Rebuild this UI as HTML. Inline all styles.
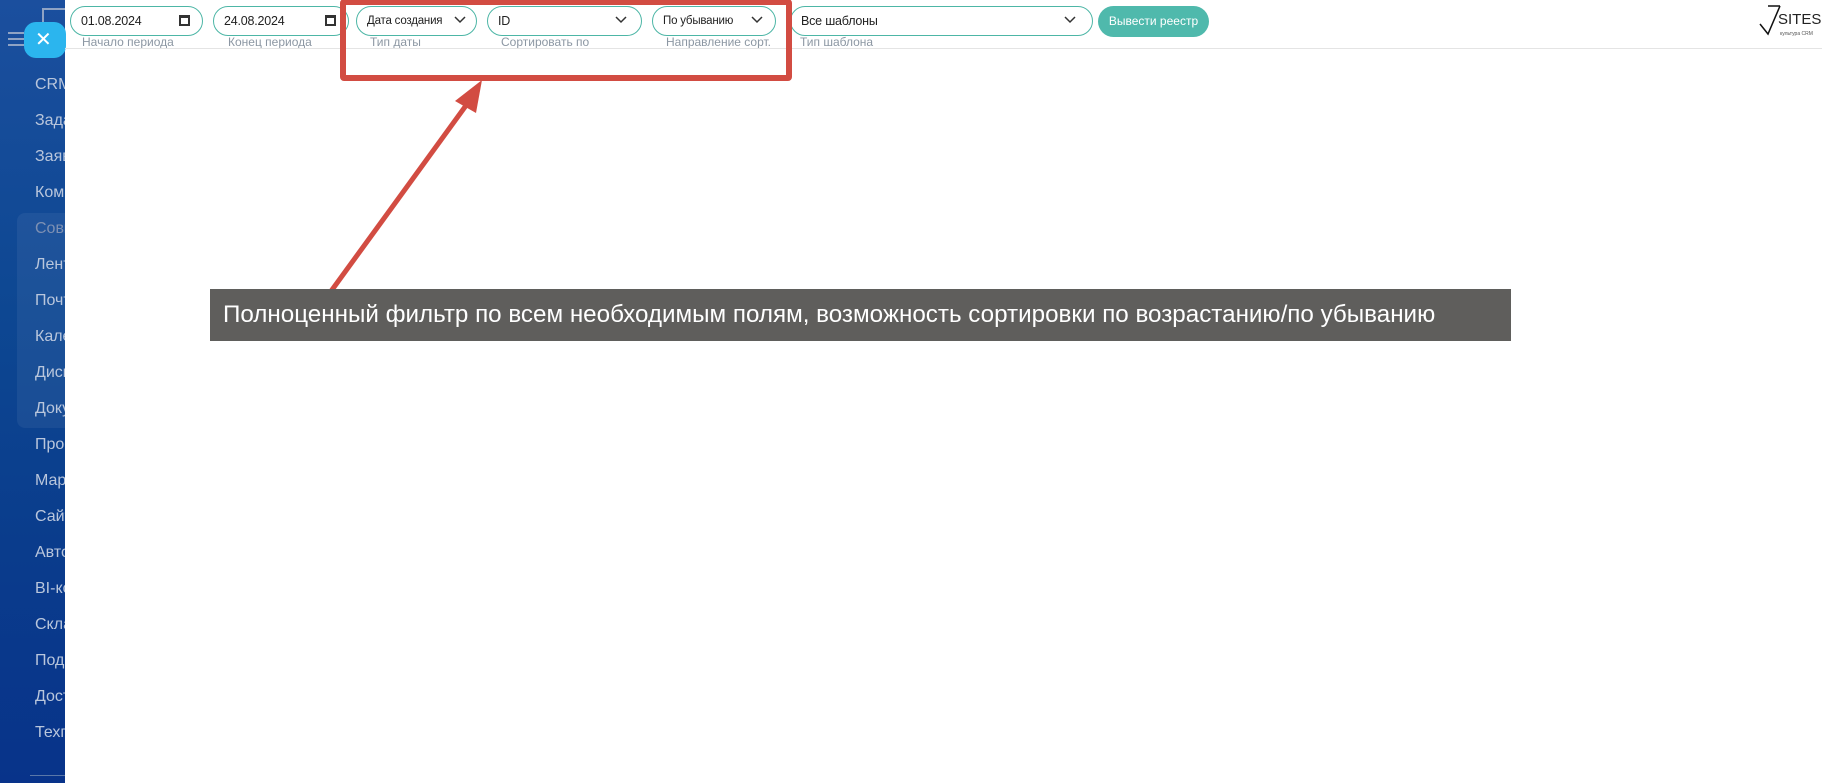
<!DOCTYPE html>
<html><head><meta charset="utf-8"><style>
*{box-sizing:border-box;margin:0;padding:0}
body{width:1822px;height:783px;overflow:hidden;background:#fff;font-family:"Liberation Sans","DejaVu Sans",sans-serif;position:relative}
.sb{position:absolute;left:0;top:0;width:65px;height:783px;background:linear-gradient(180deg,#1b4f9e 0%,#0d4792 40%,#0a3c8c 70%,#08338a 100%)}
.sb .it{position:absolute;left:35px;color:#b9c6dc;font-size:16px;white-space:nowrap;width:30px;overflow:hidden}
.grp{position:absolute;left:17px;top:213px;width:60px;height:215px;background:rgba(255,255,255,0.06);border-radius:8px}
.close{position:absolute;left:24px;top:22px;width:42px;height:36px;background:#2bb5ee;border-radius:12px;color:#fff;font-size:20px;line-height:36px;padding-left:11px}
.pill{position:absolute;top:6px;height:30px;border:1px solid #4db6a6;border-radius:15px;font-size:12.5px;color:#222;line-height:28px;padding-left:10px;letter-spacing:-0.2px}
.lab{position:absolute;top:35px;font-size:12px;color:#8c97a3}
.chev{position:absolute;right:12px;top:7px}
.cal{position:absolute;right:12px;top:8px;width:11px;height:11px;border:2px solid #333;border-top-width:3px}
.btn{position:absolute;left:1098px;top:6px;width:111px;height:31px;background:#4fb9ac;border-radius:16px;color:#fff;font-size:12px;text-align:center;line-height:31px}
.line{position:absolute;left:65px;top:48px;width:1757px;height:1px;background:#e4e4e4}
.red{position:absolute;left:340px;top:-1px;width:452px;height:82px;border:6px solid #d24c42;border-radius:4px}
.banner{position:absolute;left:210px;top:289px;width:1301px;height:52px;background:#5f5e5c;color:#fff;font-size:24.2px;line-height:52px;padding-left:13px;white-space:nowrap}
</style></head><body>
<div class="sb">
<div class="grp"></div>
<div style="position:absolute;left:42px;top:8px;width:23px;height:14px;border:2px solid #8fa3c4;border-right:none;border-bottom:none"></div>
<div style="position:absolute;left:8px;top:32px;width:16px;height:2px;background:#8fa3c4;box-shadow:0 6px 0 #8fa3c4,0 12px 0 #8fa3c4"></div>
<div class="it" style="top:76px">CRM</div>
<div class="it" style="top:112px">Задачи</div>
<div class="it" style="top:148px">Заявки</div>
<div class="it" style="top:184px">Компания</div>
<div class="it" style="top:220px;color:#7d90b3">Совместная</div>
<div class="it" style="top:256px">Лента</div>
<div class="it" style="top:292px">Почта</div>
<div class="it" style="top:328px">Календарь</div>
<div class="it" style="top:364px">Диск</div>
<div class="it" style="top:400px">Документы</div>
<div class="it" style="top:436px">Проекты</div>
<div class="it" style="top:472px">Маркетинг</div>
<div class="it" style="top:508px">Сайты</div>
<div class="it" style="top:544px">Автоматизация</div>
<div class="it" style="top:580px">BI-конструктор</div>
<div class="it" style="top:616px">Склад</div>
<div class="it" style="top:652px">Подписка</div>
<div class="it" style="top:688px">Доступ</div>
<div class="it" style="top:724px">Техподдержка</div>
<div style="position:absolute;left:30px;top:775px;width:35px;height:1px;background:#5a77a8"></div>
</div>
<div class="close">✕</div>

<div class="pill" style="left:70px;width:133px">01.08.2024<span class="cal"></span></div>
<div class="lab" style="left:82px">Начало периода</div>
<div class="pill" style="left:213px;width:136px">24.08.2024<span class="cal"></span></div>
<div class="lab" style="left:228px">Конец периода</div>
<div class="pill" style="left:356px;width:121px;font-size:11.5px">Дата создания<svg class="chev" style="right:10px" width="12" height="12" viewBox="0 0 12 12"><path d="M1 3 L6 8 L11 3" fill="none" stroke="#333" stroke-width="1.5"/></svg></div>
<div class="lab" style="left:370px">Тип даты</div>
<div class="pill" style="left:487px;width:155px">ID<svg class="chev" style="right:14px" width="12" height="12" viewBox="0 0 12 12"><path d="M1 3 L6 8 L11 3" fill="none" stroke="#333" stroke-width="1.5"/></svg></div>
<div class="lab" style="left:501px">Сортировать по</div>
<div class="pill" style="left:652px;width:124px;font-size:11.5px">По убыванию<svg class="chev" width="12" height="12" viewBox="0 0 12 12"><path d="M1 3 L6 8 L11 3" fill="none" stroke="#333" stroke-width="1.5"/></svg></div>
<div class="lab" style="left:666px">Направление сорт.</div>
<div class="pill" style="left:790px;width:303px">Все шаблоны<svg class="chev" style="right:16px" width="12" height="12" viewBox="0 0 12 12"><path d="M1 3 L6 8 L11 3" fill="none" stroke="#333" stroke-width="1.5"/></svg></div>
<div class="lab" style="left:800px">Тип шаблона</div>
<div class="btn">Вывести реестр</div>
<div class="line"></div>

<svg style="position:absolute;left:1758px;top:2px" width="64" height="40" viewBox="0 0 64 40">
<path d="M2 22 L10 32 L22 4 M10 4 L22 4" fill="none" stroke="#111" stroke-width="1.5"/>
<text x="20" y="22" font-family="Liberation Sans,sans-serif" font-size="15" fill="#222">SITES</text>
<text x="22" y="33" font-family="Liberation Sans,sans-serif" font-size="5" fill="#555">культура CRM</text>
</svg>

<div class="red"></div>
<svg style="position:absolute;left:0;top:0" width="1822" height="783">
<line x1="329" y1="294" x2="470" y2="100" stroke="#d24c42" stroke-width="5"/>
<polygon points="482,80 455,101 476,113" fill="#d24c42"/>
</svg>
<div class="banner">Полноценный фильтр по всем необходимым полям, возможность сортировки по возрастанию/по убыванию</div>
</body></html>
